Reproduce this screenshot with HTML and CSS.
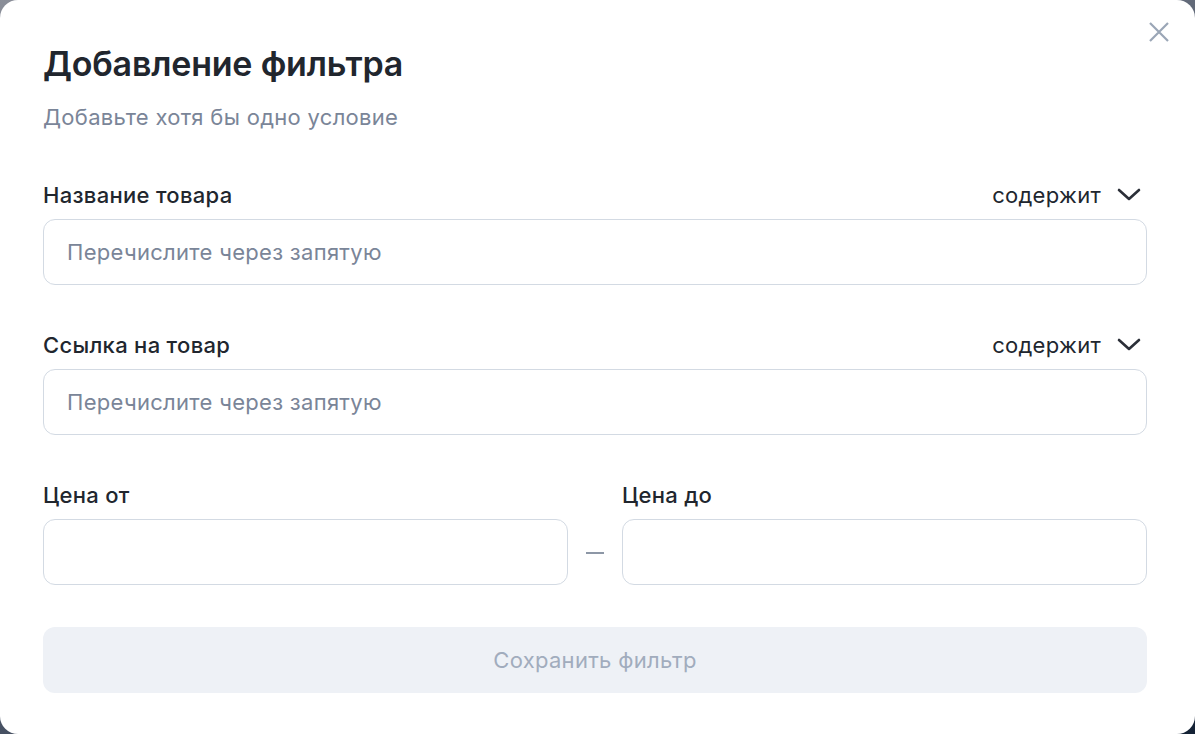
FILE: index.html
```html
<!DOCTYPE html>
<html>
<head>
    <title>Добавление фильтра</title>
    <link rel="stylesheet" href="styles.css">
</head>
<body>
<div class="modal">
    <div class="modal-close">
        <svg width="20" height="20" viewBox="0 0 20 20"><path d="M1 1L19 19M19 1L1 19" stroke="#9aa6b6" stroke-width="2.2" fill="none"/></svg>
    </div>
    <h1 class="modal-title">Добавление фильтра</h1>
    <div class="modal-subtitle">Добавьте хотя бы одно условие</div>

    <div class="field">
        <div class="field-head">
            <span class="field-label">Название товара</span>
            <span class="field-mode">содержит
                <svg width="24" height="14" viewBox="0 0 24 14"><path d="M2 2L12 11L22 2" stroke="#2b2f38" stroke-width="2.6" fill="none" stroke-linecap="round" stroke-linejoin="round"/></svg>
            </span>
        </div>
        <div class="field-input">Перечислите через запятую</div>
    </div>

    <div class="field">
        <div class="field-head">
            <span class="field-label">Ссылка на товар</span>
            <span class="field-mode">содержит
                <svg width="24" height="14" viewBox="0 0 24 14"><path d="M2 2L12 11L22 2" stroke="#2b2f38" stroke-width="2.6" fill="none" stroke-linecap="round" stroke-linejoin="round"/></svg>
            </span>
        </div>
        <div class="field-input">Перечислите через запятую</div>
    </div>

    <div class="price-row">
        <div class="field price">
            <div class="field-head"><span class="field-label">Цена от</span></div>
            <div class="field-input"></div>
        </div>
        <div class="price-dash"></div>
        <div class="field price">
            <div class="field-head"><span class="field-label">Цена до</span></div>
            <div class="field-input"></div>
        </div>
    </div>

    <div class="save-btn">Сохранить фильтр</div>
</div>
</body>
</html>
```

FILE: styles.css
```css
* {
    box-sizing: border-box;
}
html, body {
    margin: 0;
    height: 100%;
}
body {
    background: linear-gradient(160deg, #8a8e98 0%, #4a5466 60%, #142235 100%);
    font-family: Inter, "Noto Sans", sans-serif;
    overflow: hidden;
}
.modal {
    position: relative;
    width: 1195px;
    height: 734px;
    background: #fff;
    border-radius: 18px;
    padding: 40px 48px 0 43px;
}
.modal-close {
    position: absolute;
    top: 22px;
    right: 26px;
    width: 20px;
    height: 20px;
}
.modal-title {
    margin: 0;
    font-size: 34px;
    font-weight: 600;
    color: #21262e;
    line-height: 48px;
    letter-spacing: -0.2px;
}
.modal-subtitle {
    margin-top: 16px;
    font-size: 22px;
    letter-spacing: 0.3px;
    color: #7a8598;
    line-height: 26px;
}
.field {
    margin-top: 51px;
}
.field + .field {
    margin-top: 46px;
}
.field-head {
    display: flex;
    justify-content: space-between;
    align-items: center;
    height: 28px;
    margin-bottom: 10px;
    margin-top: 2px;
}
.field-label {
    font-size: 22px;
    letter-spacing: 0.3px;
    font-weight: 500;
    color: #21262e;
}
.field-mode {
    display: flex;
    align-items: center;
    gap: 16px;
    font-size: 22px;
    letter-spacing: 0.3px;
    color: #21262e;
    margin-right: 6px;
}
.field-input {
    height: 66px;
    border: 1px solid #d3dae3;
    border-radius: 12px;
    padding: 0 23px;
    display: flex;
    align-items: center;
    font-size: 22px;
    letter-spacing: 0.3px;
    color: #7a8598;
}
.price-row {
    display: flex;
    align-items: flex-end;
    margin-top: 44px;
}
.price-row .field {
    margin-top: 0;
    flex: 1;
}
.price-dash {
    width: 54px;
    height: 66px;
    display: flex;
    align-items: center;
    justify-content: center;
}
.price-dash:after {
    content: '';
    width: 18px;
    height: 2px;
    background: #8d97a6;
    margin-top: 2px;
}
.save-btn {
    margin-top: 42px;
    height: 66px;
    border-radius: 12px;
    background: #eef1f6;
    display: flex;
    align-items: center;
    justify-content: center;
    font-size: 22px;
    letter-spacing: 0.3px;
    color: #a1acbd;
}
```
